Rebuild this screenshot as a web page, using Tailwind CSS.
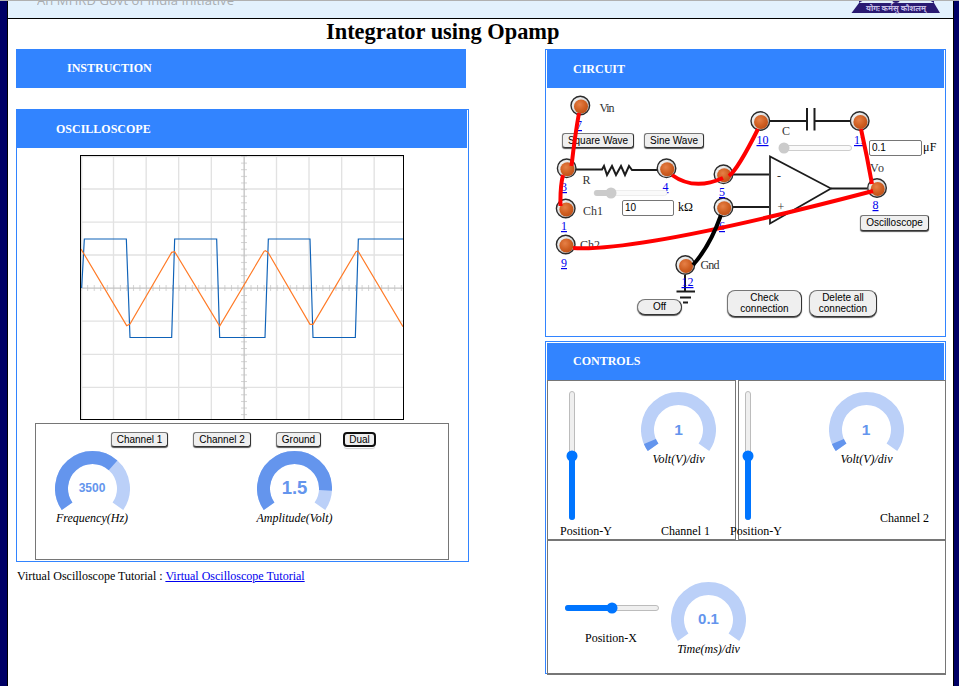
<!DOCTYPE html>
<html lang="en">
<head>
<meta charset="utf-8">
<title>Integrator using Opamp</title>
<script src="https://cdn.jsdelivr.net/npm/@tailwindcss/browser@4"></script>
</head>
<body class="w-[959px] h-[686px] overflow-hidden bg-[#000066] font-['Liberation_Serif',serif] text-[12px] leading-[14px] text-black">
<svg class="absolute w-0 h-0">
  <defs>
    <radialGradient id="copper" cx=".4" cy=".35" r=".7"><stop offset="0" stop-color="#e68047"/><stop offset=".6" stop-color="#cf5f22"/><stop offset="1" stop-color="#bd4f18"/></radialGradient>
    <linearGradient id="ring" x1="0" y1="0" x2="1" y2="1"><stop offset="0" stop-color="#fff"/><stop offset="1" stop-color="#b5b5b5"/></linearGradient>
    <g id="node"><circle r="9.3" fill="url(#ring)" stroke="#2b2b2b" stroke-width="1.4"/><circle cx=".7" cy="1" r="7" fill="url(#copper)"/></g>
    <path id="arc" d="M12.1 55.3A31 31 0 1 1 62.9 55.3" pathLength="250"/>
    <pattern id="tx" width="19.6" height="18" patternUnits="userSpaceOnUse" x="32" y="420"><rect width="3" height="18" fill="#d2d2d2"/></pattern>
    <pattern id="ty" width="18" height="19.86" patternUnits="userSpaceOnUse" x="513" y="33"><rect width="18" height="3" fill="#d2d2d2"/></pattern>
  </defs>
</svg>
<div class="h-px bg-[#b0b0b0]"></div>
<div class="ml-[7px] w-[947px] h-[685px] border-x border-black bg-white flex flex-col">
  <header class="h-[18px] shrink-0 bg-[#e3f1fd] border-b border-black flex justify-between overflow-hidden">
    <svg class="ml-[29px] -mt-[9px] shrink-0" width="200" height="18"><text x="0" y="13" textLength="197" fill="#a9adb1" font-size="13" font-family="Open Sans, sans-serif">An MHRD Govt of India Initiative</text></svg>
    <svg class="mr-[13px]" width="89" height="17" viewBox="851 1 89 17"><circle cx="896" cy="-1" r="4" fill="#2a1a72"/><path d="M859 0h5l-5 3zM934 0h-5l5 3z" fill="#2a1a72"/><path d="M859 3H934L940 13H851.5Z" fill="#2a1a72"/><text x="866" y="10.500" font-size="8" textLength="60" lengthAdjust="spacingAndGlyphs" fill="#c5bde6" font-family="Noto Sans, sans-serif" font-weight="bold">योगः कर्मसु कौशलम्</text></svg>
  </header>
  <h1 class="h-[30px] shrink-0 pl-[318px] text-[22.4px] leading-[25px] font-bold whitespace-nowrap">Integrator using Opamp</h1>
  <main class="flex pl-[8px] gap-[76px]">
    <div class="w-[453px]">
      <div class="w-[450px] h-[39px] bg-[#3284ff] text-white font-bold pl-[51px] leading-[38px]">INSTRUCTION</div>
      <section class="mt-[21px] w-[453px] h-[453px] border border-[#3284ff] flex flex-col">
        <div class="w-[450px] h-[38px] bg-[#3284ff] text-white font-bold pl-[39px] leading-[38px]">OSCILLOSCOPE</div>
        <div class="ml-[63px] mt-[7px] w-[324px] h-[265px] shrink-0 border border-black">
          <svg width="322" height="263" viewBox="33 33 966 789" fill="none">
            <path stroke="#e2e2e2" stroke-width="4" d="M35 33V822M130.500 33V822M228.500 33V822M326 33V822M424 33V822M619.500 33V822M717 33V822M815 33V822M912.500 33V822M33 34.500H999M33 132H999M33 231.500H999M33 330H999M33 528.500H999M33 628H999M33 727H999"/>
            <rect x="33" y="420" width="966" height="18" fill="url(#tx)"/><rect x="513" y="33" width="18" height="789" fill="url(#ty)"/>
            <path stroke="#c3c3c3" stroke-width="4" d="M522.500 33V822M33 429.500H999"/>
            <path stroke="#0f62b8" stroke-width="3.500" d="M35 429L43 282H169L180 577.500H305L314 282H440L449 577.500H585L595 282H720L729 577.500H856L865 282H1000"/>
            <path stroke="#ff7a26" stroke-width="3.500" d="M33 312L170 542L180 537L305 322L314 320L449 543L582 319L586 317L594 322L720 538H729L858 320L864 318L999 545"/>
          </svg>
        </div>
        <div class="ml-[18px] mt-[3px] w-[414px] h-[137px] shrink-0 border border-[#767676]">
          <div class="flex pl-[75px] pt-[8px] h-[27px] font-['Liberation_Sans',sans-serif] text-[10px]">
            <button class="w-[57px] h-[15px] rounded-[3px] border border-[#333] border-t-[#777] border-l-[#777] bg-[#efefef] leading-[13px] shadow-[0_1px_1px_#555]">Channel 1</button>
            <button class="ml-[25px] w-[58px] h-[15px] rounded-[3px] border border-[#333] border-t-[#777] border-l-[#777] bg-[#efefef] leading-[13px] shadow-[0_1px_1px_#555]">Channel 2</button>
            <button class="ml-[25px] w-[45px] h-[15px] rounded-[3px] border border-[#333] border-t-[#777] border-l-[#777] bg-[#efefef] leading-[13px] shadow-[0_1px_1px_#555]">Ground</button>
            <button class="ml-[22px] w-[33px] h-[15px] rounded-[4px] border-2 border-[#101010] bg-[#efefef] leading-[11px] shadow-[0_2px_0_-1px_#fff,0_3px_1px_-1px_#ccc]">Dual</button>
          </div>
          <div class="flex pl-[13px]">
            <div class="w-[86px] flex flex-col items-center italic">
              <svg class="ml-px" width="75" height="60" fill="none" stroke-width="13"><use href="#arc" stroke="#bbd0f8"/><use href="#arc" stroke="#6495ed" stroke-dasharray="166.500 300"/><text x="37" y="41" text-anchor="middle" fill="#6495ed" stroke="none" font-family="Liberation Sans" font-style="normal" font-weight="bold" font-size="12">3500</text></svg>
              <span>Frequency(Hz)</span>
            </div>
            <div class="ml-[117px] w-[85px] flex flex-col items-center italic">
              <svg width="75" height="60" fill="none" stroke-width="13"><use href="#arc" stroke="#bbd0f8"/><use href="#arc" stroke="#6495ed" stroke-dasharray="218.500 300"/><text x="37.500" y="43" text-anchor="middle" fill="#6495ed" stroke="none" font-family="Liberation Sans" font-style="normal" font-weight="bold" font-size="18.500">1.5</text></svg>
              <span>Amplitude(Volt)</span>
            </div>
          </div>
        </div>
      </section>
      <p class="mt-[7px] pl-[1px] whitespace-nowrap">Virtual Oscilloscope Tutorial : <a class="text-[#0000ee] underline">Virtual Oscilloscope Tutorial</a></p>
    </div>

    <div class="w-[401px]">
      <section class="h-[288px] border border-[#3284ff]">
        <div class="mx-px h-[38px] bg-[#3284ff] text-white font-bold pl-[26px] leading-[38px]">CIRCUIT</div>
        <div class="relative h-[248px] font-['Liberation_Sans',sans-serif] text-[10px]">
          <svg class="absolute inset-0" width="399" height="248" viewBox="546 88 399 248" font-family="Liberation Serif" font-size="12">
            <g fill="none" stroke="#1c1c1c" stroke-width="2">
              <path d="M576 169.500H602L604 166L607 175L612 166L616 175L621 166L625 175L629 166L632 170H657M770 121H806M815 121H850M733 174.500H769M733 207H769M831 188.500H867M685 275V291"/>
              <path d="M807 108V130.500M814.500 108V130.500"/><path stroke-width="1.700" d="M770 156.500V223.500L831 188.500Z"/>
              <path d="M676.500 291.500H695M680 297.500H691M683 302.500H688"/>
            </g>
            <g fill="#333"><text x="599.500" y="112" textLength="15">Vin</text><text x="582.500" y="183.500">R</text><text x="583" y="214.500">Ch1</text><text x="580" y="248.500">Ch2</text><text x="700.500" y="269" textLength="19">Gnd</text><text x="782" y="134.500">C</text><text x="870" y="171.500" textLength="14">Vo</text><text x="777" y="180">-</text><text x="777.500" y="210.500">+</text></g>
            <use href="#node" x="580.300" y="105.500"/><use href="#node" x="566.700" y="168.300"/><use href="#node" x="666.500" y="168.300"/><use href="#node" x="723.500" y="174.300"/><use href="#node" x="565.700" y="208.500"/><use href="#node" x="723.500" y="207.300"/><use href="#node" x="565.700" y="244.500"/><use href="#node" x="685.300" y="265"/><use href="#node" x="760.300" y="121"/><use href="#node" x="859.700" y="121"/><use href="#node" x="877" y="188"/>
            <g fill="#0000ee" text-decoration="underline"><text x="576" y="129">7</text><text x="561" y="191">3</text><text x="561" y="230">1</text><text x="561" y="267">9</text><text x="662.500" y="191">4</text><text x="719" y="196">5</text><text x="719" y="230">6</text><text x="756.500" y="144">10</text><text x="854" y="144">11</text><text x="872.500" y="209">8</text><text x="681.500" y="286">12</text></g>
            <rect x="594" y="190.500" width="73" height="5" rx="2.500" fill="#fafafa" stroke="#ededed"/><rect x="594" y="190" width="20" height="6" rx="3" fill="#cbcbcb"/><circle cx="611" cy="193" r="5.500" fill="#cbcbcb"/>
            <rect x="781" y="145.500" width="70.500" height="5" rx="2.500" fill="#fafafa" stroke="#cdcdcd"/><circle cx="784" cy="148" r="5.500" fill="#cbcbcb"/>
            <text x="678" y="211" textLength="15">kΩ</text><text x="923" y="151" textLength="13.500">μF</text>
          </svg>
          <button class="absolute left-[16px] top-[45px] w-[72px] h-[15px] rounded-[3px] border border-[#333] border-t-[#777] border-l-[#777] bg-[#efefef] leading-[13px] shadow-[0_1px_1px_#555]">Square Wave</button>
          <button class="absolute left-[98px] top-[45px] w-[60px] h-[15px] rounded-[3px] border border-[#333] border-t-[#777] border-l-[#777] bg-[#efefef] leading-[13px] shadow-[0_1px_1px_#555]">Sine Wave</button>
          <button class="absolute left-[314px] top-[127px] w-[69px] h-[16px] rounded-[3px] border border-[#333] border-t-[#777] border-l-[#777] bg-[#efefef] leading-[14px] shadow-[0_1px_1px_#555]">Oscilloscope</button>
          <button class="absolute left-[91px] top-[211px] w-[45px] h-[16px] rounded-[8px] border border-[#333] border-t-[#777] border-l-[#777] bg-[#efefef] leading-[14px] shadow-[0_1px_1px_#555]">Off</button>
          <button class="absolute left-[181px] top-[202px] w-[75px] h-[27px] rounded-[8px] border border-[#333] border-t-[#777] border-l-[#777] bg-[#efefef] leading-[11px] pb-[2px] shadow-[0_1px_1px_#555]">Check<br>connection</button>
          <button class="absolute left-[263px] top-[202px] w-[68px] h-[27px] rounded-[8px] border border-[#333] border-t-[#777] border-l-[#777] bg-[#efefef] leading-[11px] pb-[2px] shadow-[0_1px_1px_#555]">Delete all<br>connection</button>
          <input class="absolute left-[76px] top-[112px] w-[52px] h-[16px] rounded-[2px] border border-[#767676] bg-white pl-[2px] pb-[2px]" value="10">
          <input class="absolute left-[323px] top-[52px] w-[53px] h-[16px] rounded-[2px] border border-[#767676] bg-white pl-[2px] pb-[2px]" value="0.1">
          <svg class="absolute inset-0" width="399" height="248" viewBox="546 88 399 248" fill="none" stroke="#f00" stroke-width="4">
            <path d="M579 113Q575 135 571.500 166M563 175Q560 187 560.500 206M672 175Q694 191 723 178M729 176Q738 169 758 129M861 129Q867 156 872 184M573 248Q641 252 873 191"/>
            <path stroke="#000" d="M721 215Q710 246 693 265"/>
          </svg>
        </div>
      </section>

      <section class="mt-[4px] h-[333px] border border-[#3284ff]">
        <div class="mt-px mx-px h-[37px] bg-[#3284ff] text-white font-bold pl-[26px] leading-[37px]">CONTROLS</div>
        <div class="flex ml-px w-[399px] h-[161px] border-b border-[#767676]">
          <div class="w-[189px] h-[160px] border border-[#767676] pl-[12px] flex flex-col">
            <div class="flex h-[139px]">
              <svg class="mt-[10px] ml-[6px] shrink-0" width="13" height="130"><rect x="3.500" y=".5" width="5" height="128" rx="2.500" fill="#efefef" stroke="#bcbcbc"/><rect x="3" y="65" width="6" height="64" rx="3" fill="#0075ff"/><circle cx="6" cy="65" r="5.500" fill="#0075ff"/></svg>
              <div class="mt-[11px] ml-[57px] w-[85px] shrink-0 flex flex-col items-center italic">
                <svg width="75" height="60" fill="none" stroke-width="13"><use href="#arc" stroke="#bbd0f8"/><use href="#arc" stroke="#6495ed" stroke-dasharray="12.500 300"/><text x="37.500" y="43" text-anchor="middle" fill="#6495ed" stroke="none" font-family="Liberation Sans" font-style="normal" font-weight="bold" font-size="15.500">1</text></svg>
                <span>Volt(V)/div</span>
              </div>
            </div>
            <div class="flex justify-between pr-[25px] pt-[4px]"><span>Position-Y</span><span>Channel 1</span></div>
          </div>
          <div class="ml-[2px] w-[208px] h-[160px] border border-[#767676] flex flex-col">
            <div class="flex h-[139px]">
              <svg class="mt-[10px] ml-[3px] shrink-0" width="13" height="130"><rect x="3.500" y=".5" width="5" height="128" rx="2.500" fill="#efefef" stroke="#bcbcbc"/><rect x="3" y="65" width="6" height="64" rx="3" fill="#0075ff"/><circle cx="6" cy="65" r="5.500" fill="#0075ff"/></svg>
              <div class="mt-[11px] ml-[69px] w-[85px] shrink-0 flex flex-col items-center italic">
                <svg width="75" height="60" fill="none" stroke-width="13"><use href="#arc" stroke="#bbd0f8"/><use href="#arc" stroke="#6495ed" stroke-dasharray="12.500 300"/><text x="37" y="43" text-anchor="middle" fill="#6495ed" stroke="none" font-family="Liberation Sans" font-style="normal" font-weight="bold" font-size="15.500">1</text></svg>
                <span>Volt(V)/div</span>
              </div>
            </div>
            <div class="flex justify-between pr-[16px] -ml-[9px]"><span class="pt-[4px]">Position-Y</span><span class="-mt-[9px]">Channel 2</span></div>
          </div>
        </div>
        <div class="ml-px w-[399px] h-[132px] border-x border-[#767676] shadow-[0_2px_0_#767676] flex">
          <div class="mt-[61px] ml-[17px] w-[94px] flex flex-col items-center">
            <svg width="94" height="13"><rect x=".5" y="3.500" width="93" height="5" rx="2.500" fill="#efefef" stroke="#bcbcbc"/><rect y="3" width="47" height="6" rx="3" fill="#0075ff"/><circle cx="47" cy="6" r="5.500" fill="#0075ff"/></svg>
            <span class="mt-[16px] -ml-[2px]">Position-X</span>
          </div>
          <div class="mt-[41px] ml-[7px] w-[85px] flex flex-col items-center italic">
            <svg width="75" height="60" fill="none" stroke-width="13"><use href="#arc" stroke="#bbd0f8"/><text x="37.500" y="42" text-anchor="middle" fill="#6495ed" stroke="none" font-family="Liberation Sans" font-style="normal" font-weight="bold" font-size="15">0.1</text></svg>
            <span>Time(ms)/div</span>
          </div>
        </div>
      </section>
    </div>
  </main>
</div>
</body>
</html>
